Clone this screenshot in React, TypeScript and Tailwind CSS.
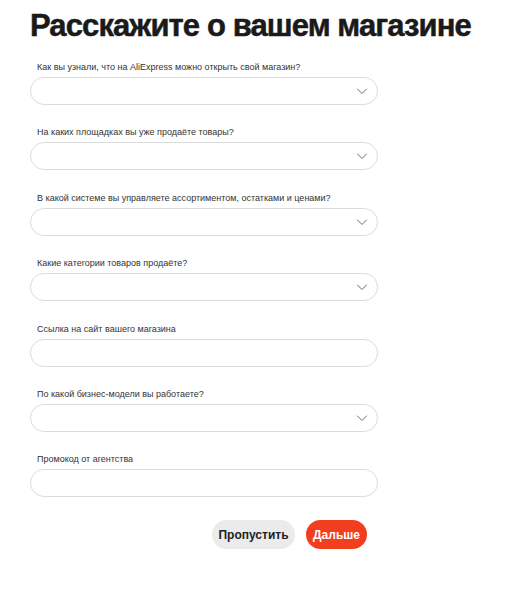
const fields: { label: string; select: boolean }[] = [
  { label: "Как вы узнали, что на AliExpress можно открыть свой магазин?", select: true },
  { label: "На каких площадках вы уже продаёте товары?", select: true },
  { label: "В какой системе вы управляете ассортиментом, остатками и ценами?", select: true },
  { label: "Какие категории товаров продаёте?", select: true },
  { label: "Ссылка на сайт вашего магазина", select: false },
  { label: "По какой бизнес-модели вы работаете?", select: true },
  { label: "Промокод от агентства", select: false },
];

function Chevron() {
  return (
    <svg width="12" height="8" viewBox="0 0 12 8" fill="none" className="text-[#6b6b6b]">
      <path d="M1.5 2l4.5 4.5 4.5-4.5" stroke="currentColor" strokeWidth="1" strokeLinecap="round" strokeLinejoin="round" />
    </svg>
  );
}

function Field({ label, select }: { label: string; select: boolean }) {
  return (
    <div className="flex flex-col">
      <label className="pl-[7px] text-[9px] leading-[12px] text-[#333]">{label}</label>
      <div className="mt-[4px] flex h-[28px] items-center justify-end rounded-full border border-[#dcdcdc] bg-white pr-[9px]">
        {select && <Chevron />}
      </div>
    </div>
  );
}

export default function App() {
  return (
    <div className="min-h-[600px] bg-white pl-[30px] pt-[8px] font-['Liberation_Sans',Arial,sans-serif] text-[#222]">
      <h1 className="text-[31px] font-bold leading-[36px] tracking-[-0.9px] text-[#1a1a1a] [-webkit-text-stroke:0.5px_#1a1a1a]">
        Расскажите о вашем магазине
      </h1>
      <div className="mt-[17px] flex w-[348px] flex-col gap-[21.4px]">
        {fields.map((f) => (
          <Field key={f.label} label={f.label} select={f.select} />
        ))}
      </div>
      <div className="ml-[182px] mt-[23px] flex gap-[11px]">
        <button className="h-[29px] w-[83px] rounded-full bg-[#ebebeb] text-[12px] font-bold text-[#222]">
          Пропустить
        </button>
        <button className="h-[29px] w-[61px] rounded-full bg-[#f03e1f] text-[12px] font-bold text-white">
          Дальше
        </button>
      </div>
    </div>
  );
}
